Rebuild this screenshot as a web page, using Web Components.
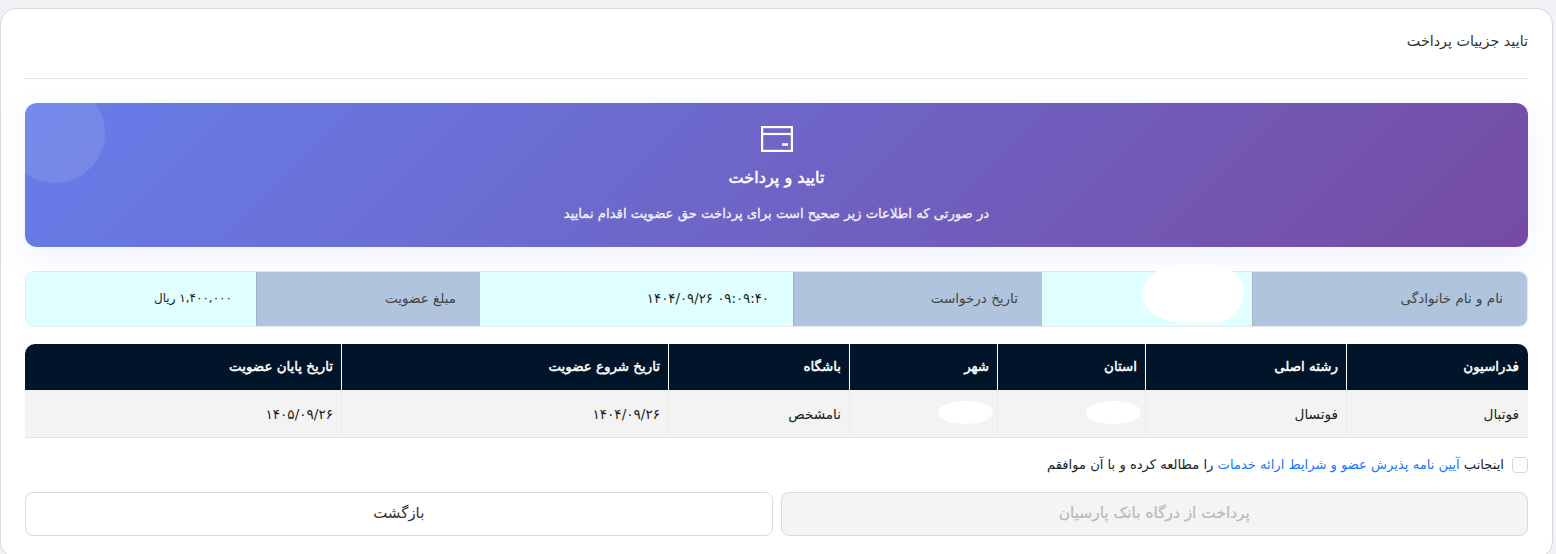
<!DOCTYPE html>
<html lang="fa" dir="rtl">
<head>
<meta charset="utf-8">
<title>تایید جزییات پرداخت</title>
<style>
  html, body { margin: 0; height: 100%; overflow: hidden; }
  body {
    background: #f1f2f6;
    font-family: "DejaVu Sans", sans-serif;
    color: #212529;
  }
</style>
</head>
<body>
<payment-card>
  <span slot="title">تایید جزییات پرداخت</span>
  <pay-banner
    heading="تایید و پرداخت"
    text="در صورتی که اطلاعات زیر صحیح است برای پرداخت حق عضویت اقدام نمایید"></pay-banner>
  <info-strip></info-strip>
  <member-table></member-table>
  <terms-check></terms-check>
  <pay-actions></pay-actions>
</payment-card>

<script>
class PaymentCard extends HTMLElement {
  constructor() {
    super();
    this.attachShadow({ mode: "open" });
    this.shadowRoot.innerHTML = `
      <style>
        :host {
          display: block;
          box-sizing: border-box;
          width: 1553px;
          height: 550px;
          margin: 8px 3px 0 0;
          background: #fff;
          border: 1px solid #d9d9dc;
          border-radius: 16px;
          padding: 24px 24px 0;
        }
        .title {
          height: 46px;
          box-sizing: border-box;
          border-bottom: 1px solid #e5e5e5;
          font-size: 14.3px;
          line-height: 16px;
          color: #333;
        }
        .body { padding-top: 24px; }
      </style>
      <div class="title"><slot name="title"></slot></div>
      <div class="body"><slot></slot></div>
    `;
  }
}

class PayBanner extends HTMLElement {
  constructor() {
    super();
    this.attachShadow({ mode: "open" });
    this.shadowRoot.innerHTML = `
      <style>
        :host {
          display: block;
          position: relative;
          height: 144px;
          box-sizing: border-box;
          padding-top: 23px;
          border-radius: 12px;
          color: #fff;
          text-align: center;
          background: linear-gradient(135deg, #667eea 0%, #764ba2 100%);
          box-shadow: 0 10px 30px rgba(102, 126, 234, 0.1);
        }
        .clip {
          position: absolute;
          inset: 0;
          overflow: hidden;
          border-radius: 12px;
        }
        .clip::before {
          content: "";
          position: absolute;
          top: -20px;
          left: -20px;
          width: 100px;
          height: 100px;
          border-radius: 50%;
          background: rgba(255, 255, 255, 0.1);
        }
        .inner { position: relative; }
        svg { display: block; margin: 0 auto; }
        h2 {
          margin: 16px 0 0;
          font-size: 16.1px;
          line-height: 20px;
          font-weight: 400;
          -webkit-text-stroke: 0.5px #fff;
        }
        p {
          margin: 16px 0 0;
          font-size: 13.2px;
          line-height: 20px;
          font-weight: 400;
          -webkit-text-stroke: 0.3px #fff;
          opacity: .92;
        }
      </style>
      <div class="clip"></div>
      <div class="inner">
        <svg width="32" height="26" viewBox="0 0 32 26" fill="none" stroke="#fff" stroke-width="2.2">
          <rect x="1.1" y="1.1" width="29.8" height="23.8"/>
          <path d="M1 8h30"/>
          <path d="M21 18.5h6" stroke-width="2.6"/>
        </svg>
        <h2></h2>
        <p></p>
      </div>
    `;
    this.shadowRoot.querySelector("h2").textContent = this.getAttribute("heading");
    this.shadowRoot.querySelector("p").textContent = this.getAttribute("text");
  }
}

class InfoStrip extends HTMLElement {
  constructor() {
    super();
    this.attachShadow({ mode: "open" });
    const items = [
      ["label", "نام و نام خانوادگی"],
      ["value blur", ""],
      ["label", "تاریخ درخواست"],
      ["value date", "۰۹:۰۹:۴۰ ۱۴۰۴/۰۹/۲۶"],
      ["label", "مبلغ عضویت"],
      ["value amount", "۱,۴۰۰,۰۰۰ ریال"],
    ];
    this.shadowRoot.innerHTML = `
      <style>
        :host {
          display: grid;
          grid-template-columns: 275px 210px 249px 313px 224px 1fr;
          height: 56px;
          margin-top: 24px;
          box-sizing: border-box;
          border: 1px solid #e6e9ee;
          border-radius: 8px;
        }
        div {
          display: flex;
          align-items: center;
          padding: 0 24px 2px;
          font-size: 13.5px;
          position: relative;
        }
        .label { background: #b0c4de; color: #444; border-left: 1px solid #a0b2c9; }
        .value { background: #e0ffff; color: #1c1c1c; border-left: 1px solid #e0ffff; }
        .date { font-size: 13.3px; }
        .amount { font-size: 12px; }
        div:first-of-type { border-radius: 0 8px 8px 0; }
        div:last-of-type { border-radius: 8px 0 0 8px; border-left: 0; }
        .blur::after {
          content: "";
          position: absolute;
          top: -7px;
          left: 99px;
          width: 102px;
          height: 58px;
          background: #fff;
          border-radius: 38px 34px 30px 44px / 30px 26px 30px 28px;
        }
      </style>
      ${items.map(([cls, text]) => `<div class="${cls}">${text}</div>`).join("")}
    `;
  }
}

class MemberTable extends HTMLElement {
  constructor() {
    super();
    this.attachShadow({ mode: "open" });
    const heads = ["فدراسیون", "رشته اصلی", "استان", "شهر", "باشگاه", "تاریخ شروع عضویت", "تاریخ پایان عضویت"];
    const row = ["فوتبال", "فوتسال", "", "", "نامشخص", "۱۴۰۴/۰۹/۲۶", "۱۴۰۵/۰۹/۲۶"];
    const cell = (cls, text) =>
      `<div class="${cls}">${text || '<span class="blob"></span>'}</div>`;
    this.shadowRoot.innerHTML = `
      <style>
        :host {
          display: grid;
          grid-template-columns: 182px 201px 148px 148px 181px 327px 1fr;
          grid-template-rows: 46px 47px;
          margin-top: 17px;
          height: 94px;
          box-sizing: border-box;
          border-bottom: 1px solid #e3e3e3;
        }
        div {
          display: flex;
          align-items: center;
          padding: 0 8px;
        }
        .th {
          background: #001529;
          color: #fff;
          font-size: 13.4px;
          font-weight: 400;
          -webkit-text-stroke: 0.45px #fff;
          padding-bottom: 2px;
          border-left: 1px solid #fff;
        }
        .th:first-of-type { border-top-right-radius: 10px; padding-right: 9px; }
        .th:nth-of-type(7) { border-top-left-radius: 10px; border-left: 0; }
        .td {
          background: #f3f3f3;
          color: #222;
          font-size: 13.6px;
          border-left: 1px solid #ececec;
        }
        .td:nth-of-type(8) { padding-right: 9px; }
        .td:last-of-type { border-left: 0; }
        .blob {
          width: 55px;
          height: 23px;
          margin: -3px -4px 0 0;
          background: #fff;
          border-radius: 50%;
        }
      </style>
      ${heads.map((h) => cell("th", h)).join("")}
      ${row.map((r) => cell("td", r)).join("")}
    `;
  }
}

class TermsCheck extends HTMLElement {
  constructor() {
    super();
    this.attachShadow({ mode: "open" });
    this.shadowRoot.innerHTML = `
      <style>
        :host {
          display: flex;
          align-items: center;
          gap: 8px;
          height: 16px;
          margin-top: 19px;
          font-size: 13.1px;
          color: #222;
        }
        .box {
          width: 14px;
          height: 14px;
          border: 1px solid #d6d6d6;
          border-radius: 4px;
          background: #fff;
        }
        .text { padding-bottom: 2px; }
        a { color: #1677ff; text-decoration: none; }
      </style>
      <span class="box"></span>
      <span class="text">اینجانب <a href="#">آیین نامه پذیرش عضو و شرایط ارائه خدمات</a> را مطالعه کرده و با آن موافقم</span>
    `;
  }
}

class PayActions extends HTMLElement {
  constructor() {
    super();
    this.attachShadow({ mode: "open" });
    this.shadowRoot.innerHTML = `
      <style>
        :host {
          display: grid;
          grid-template-columns: 1fr 1fr;
          gap: 8px;
          margin-top: 19px;
        }
        button {
          height: 44px;
          padding: 0 0 3px;
          border-radius: 8px;
          font: 15px "DejaVu Sans", sans-serif;
          border: 1px solid #d9d9d9;
          background: #fff;
          color: #333;
        }
        button[disabled] {
          background: #f4f4f4;
          color: #b8b8b8;
          font-size: 15.4px;
          -webkit-text-stroke: 0.2px #b8b8b8;
        }
      </style>
      <button disabled>پرداخت از درگاه بانک پارسیان</button>
      <button class="back">بازگشت</button>
    `;
  }
}

customElements.define("payment-card", PaymentCard);
customElements.define("pay-banner", PayBanner);
customElements.define("info-strip", InfoStrip);
customElements.define("member-table", MemberTable);
customElements.define("terms-check", TermsCheck);
customElements.define("pay-actions", PayActions);
</script>
</body>
</html>
